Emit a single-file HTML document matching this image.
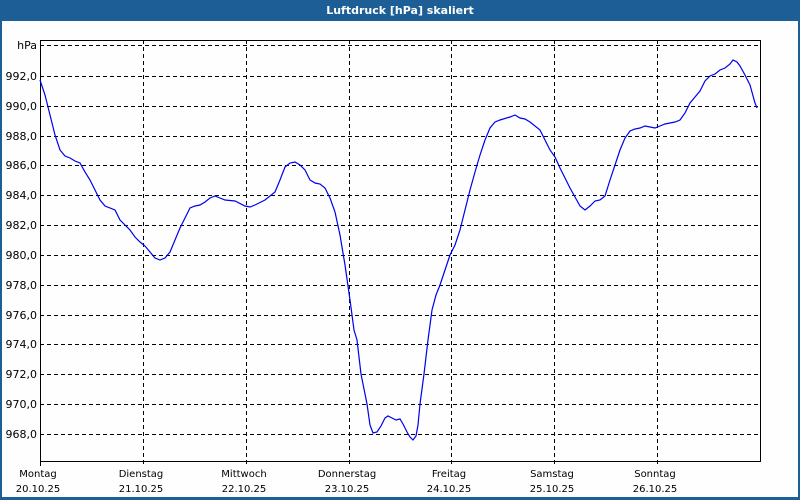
<!DOCTYPE html>
<html><head><meta charset="utf-8"><style>
body{margin:0;width:800px;height:500px;overflow:hidden;background:#fff;font-family:Tahoma,"DejaVu Sans","Liberation Sans",sans-serif}
</style></head><body>
<svg width="800" height="500" xmlns="http://www.w3.org/2000/svg" style="display:block">
<rect x="0" y="0" width="800" height="500" fill="#1c5e95"/>
<rect x="2" y="21" width="796" height="476" fill="#fdfefd"/>
<text x="400" y="14" fill="#fff" font-size="11" font-weight="bold" text-anchor="middle" font-family="DejaVu Sans, sans-serif">Luftdruck [hPa] skaliert</text>
<g stroke="#000" stroke-width="1" stroke-dasharray="4,3" shape-rendering="crispEdges">
<line x1="40" y1="45.5" x2="760" y2="45.5"/>
<line x1="40" y1="76.5" x2="760" y2="76.5"/><line x1="40" y1="106.5" x2="760" y2="106.5"/>
<line x1="40" y1="136.5" x2="760" y2="136.5"/><line x1="40" y1="165.5" x2="760" y2="165.5"/>
<line x1="40" y1="195.5" x2="760" y2="195.5"/><line x1="40" y1="225.5" x2="760" y2="225.5"/>
<line x1="40" y1="255.5" x2="760" y2="255.5"/><line x1="40" y1="285.5" x2="760" y2="285.5"/>
<line x1="40" y1="315.5" x2="760" y2="315.5"/><line x1="40" y1="344.5" x2="760" y2="344.5"/>
<line x1="40" y1="374.5" x2="760" y2="374.5"/><line x1="40" y1="404.5" x2="760" y2="404.5"/>
<line x1="40" y1="434.5" x2="760" y2="434.5"/>
<line x1="143.5" y1="40" x2="143.5" y2="466"/><line x1="246.5" y1="40" x2="246.5" y2="466"/>
<line x1="349.5" y1="40" x2="349.5" y2="466"/><line x1="451.5" y1="40" x2="451.5" y2="466"/>
<line x1="554.5" y1="40" x2="554.5" y2="466"/><line x1="657.5" y1="40" x2="657.5" y2="466"/>
</g>
<g stroke="#000" stroke-width="1" fill="none" shape-rendering="crispEdges">
<path d="M40.5 40.5H760.5V461.5H40.5Z"/>
<line x1="40.5" y1="461" x2="40.5" y2="466"/>
</g>
<g font-size="11" font-family="DejaVu Sans, sans-serif" fill="#000" text-anchor="end">
<text x="37" y="49">hPa</text>
<text x="37" y="80">992,0</text><text x="37" y="110">990,0</text><text x="37" y="140">988,0</text>
<text x="37" y="169">986,0</text><text x="37" y="199">984,0</text><text x="37" y="229">982,0</text>
<text x="37" y="259">980,0</text><text x="37" y="289">978,0</text><text x="37" y="319">976,0</text>
<text x="37" y="348">974,0</text><text x="37" y="378">972,0</text><text x="37" y="408">970,0</text>
<text x="37" y="438">968,0</text>
</g>
<g font-size="10" font-family="DejaVu Sans, sans-serif" fill="#000" text-anchor="middle">
<text x="38" y="477">Montag</text><text x="38" y="492">20.10.25</text>
<text x="141" y="477">Dienstag</text><text x="141" y="492">21.10.25</text>
<text x="244" y="477">Mittwoch</text><text x="244" y="492">22.10.25</text>
<text x="347" y="477">Donnerstag</text><text x="347" y="492">23.10.25</text>
<text x="449" y="477">Freitag</text><text x="449" y="492">24.10.25</text>
<text x="552" y="477">Samstag</text><text x="552" y="492">25.10.25</text>
<text x="655" y="477">Sonntag</text><text x="655" y="492">26.10.25</text>
</g>
<polyline fill="none" stroke="#0000ee" stroke-width="1.2" points="40,80 45,95 50,115 55,135 60,150 65,156 70,158 75,161 80,163 85,172 90,180 95,190 100,200 105,206 115,210 120,220 125,225 130,230 135,237 140,242 145,246 150,252 155,258 160,260 165,258 170,252 175,240 180,228 185,218 190,208 195,206 200,205 205,202 210,198 215,196 220,198 225,200 235,201 245,206 250,207 255,205 265,200 275,192 280,180 285,167 290,163 295,162 300,165 305,170 310,180 315,183 320,184 325,188 330,198 335,212 340,235 345,265 350,300 354,330 357,340 361,374 367,404 370,425 373,433 377,432 381,426 385,418 388,416 392,418 396,420 400,419 403,424 407,432 410,437 413,440 416,436 418,425 420,404 424,374 428,340 432,310 436,295 440,285 445,270 450,255 455,245 460,230 465,210 470,190 475,172 480,155 485,140 490,128 495,122 500,120 510,117 515,115 520,118 525,119 530,122 540,130 545,140 550,150 555,157 560,168 565,178 570,188 575,197 580,206 585,210 590,206 595,201 600,200 605,196 610,180 615,165 620,150 625,138 630,131 635,129 640,128 645,126 650,127 655,128 660,126 665,124 675,122 680,120 685,113 690,103 695,97 700,91 705,81 710,76 715,74 720,70 725,68 730,64 733,60 737,62 740,66 745,75 750,85 755,103 757,108"/>
</svg>
</body></html>
